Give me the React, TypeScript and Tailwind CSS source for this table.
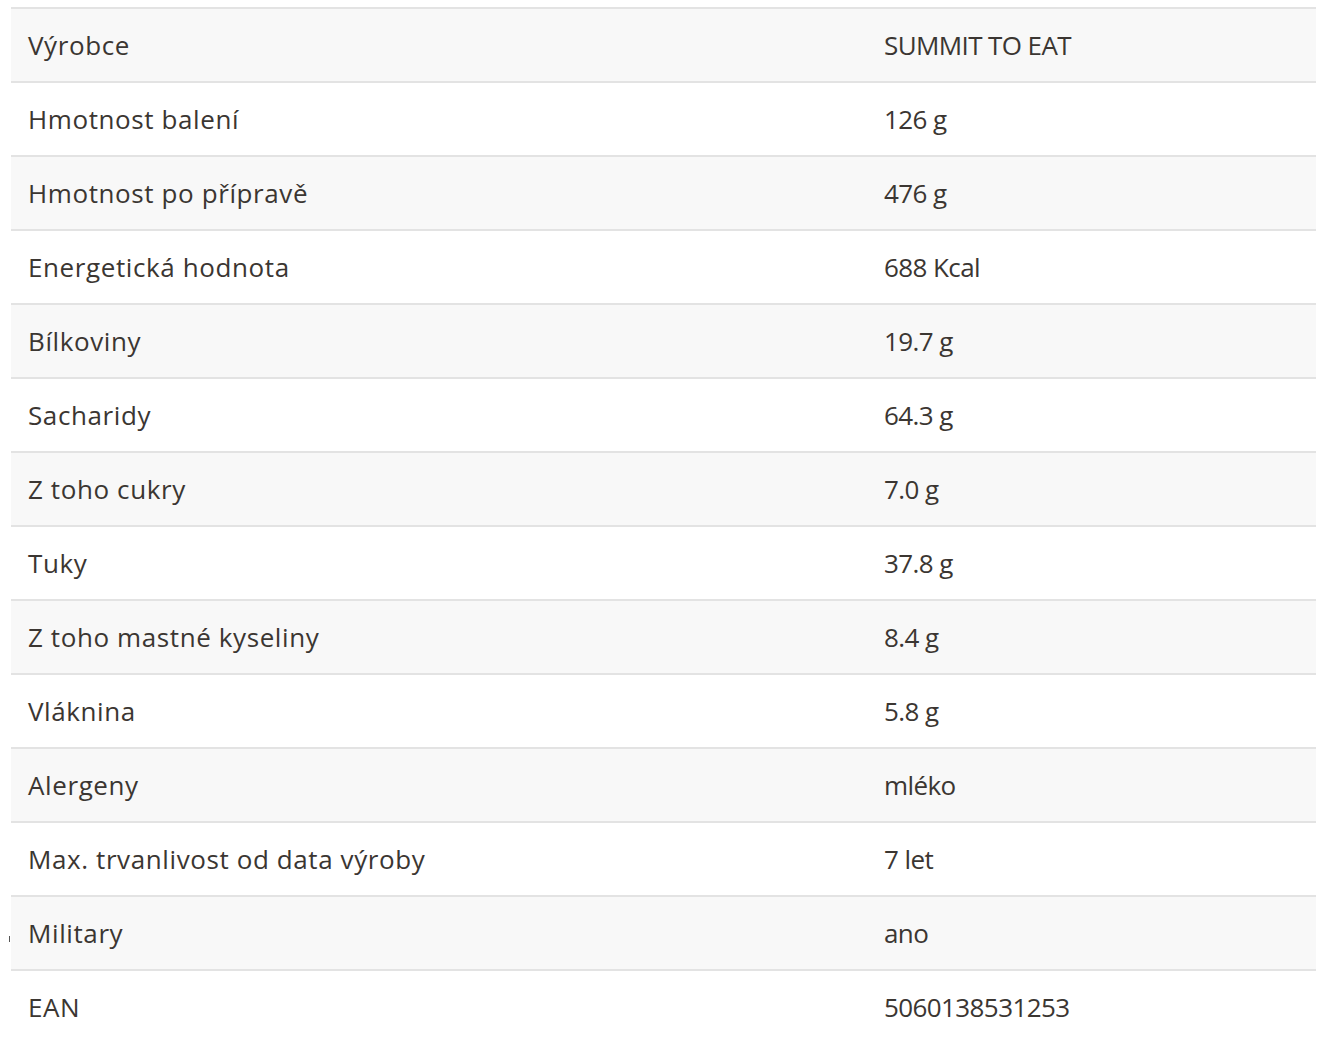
import React from "react";

const rows: [string, string][] = [
  ["Výrobce", "SUMMIT TO EAT"],
  ["Hmotnost balení", "126 g"],
  ["Hmotnost po přípravě", "476 g"],
  ["Energetická hodnota", "688 Kcal"],
  ["Bílkoviny", "19.7 g"],
  ["Sacharidy", "64.3 g"],
  ["Z toho cukry", "7.0 g"],
  ["Tuky", "37.8 g"],
  ["Z toho mastné kyseliny", "8.4 g"],
  ["Vláknina", "5.8 g"],
  ["Alergeny", "mléko"],
  ["Max. trvanlivost od data výroby", "7 let"],
  ["Military", "ano"],
  ["EAN", "5060138531253"],
];

export default function App() {
  return (
    <div
      className="w-[1329px] h-[1044px] bg-white overflow-hidden relative"
      style={{ fontFamily: '"Open Sans", "Noto Sans", sans-serif' }}
    >
      <span className="absolute left-[9px] top-[936px] w-[1px] h-[6px] bg-[#555]" />
      <div className="ml-[11px] mt-[7px] w-[1305px]">
        {rows.map(([k, v], i) => (
          <div
            key={k}
            className={`flex items-center h-[74px] border-t-2 border-[#e3e3e3] text-[26px] font-medium text-[#3b3632] ${
              i % 2 === 0 ? "bg-[#f8f8f8]" : "bg-white"
            }`}
          >
            <div className="w-[873px] pl-[17px] tracking-[0.6px]">{k}</div>
            <div className="flex-1 tracking-[-0.6px]">{v}</div>
          </div>
        ))}
      </div>
    </div>
  );
}
